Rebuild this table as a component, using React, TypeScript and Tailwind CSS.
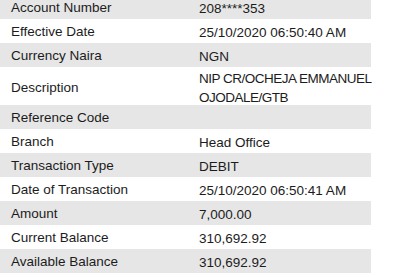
const rows: { label: string; value: string[] }[] = [
  { label: "Account Number", value: ["208****353"] },
  { label: "Effective Date", value: ["25/10/2020 06:50:40 AM"] },
  { label: "Currency Naira", value: ["NGN"] },
  { label: "Description", value: ["NIP CR/OCHEJA EMMANUEL", "OJODALE/GTB"] },
  { label: "Reference Code", value: [""] },
  { label: "Branch", value: ["Head Office"] },
  { label: "Transaction Type", value: ["DEBIT"] },
  { label: "Date of Transaction", value: ["25/10/2020 06:50:41 AM"] },
  { label: "Amount", value: ["7,000.00"] },
  { label: "Current Balance", value: ["310,692.92"] },
  { label: "Available Balance", value: ["310,692.92"] },
];

export default function App() {
  return (
    <div className="w-[396px] h-[277px] overflow-hidden bg-white">
      <div
        className="-mt-[5px] w-[371px] text-[13.5px] text-[#1c1c1c]"
        style={{ fontFamily: '"Liberation Sans", Arial, sans-serif' }}
      >
        {rows.map((row, i) => {
          const multi = row.value.length > 1;
          return (
            <div
              key={row.label}
              className={`grid grid-cols-[199px_1fr] items-center pt-[2px] ${
                multi ? "h-[38px]" : "h-[24px]"
              } ${i % 2 === 0 ? "bg-[#e6e6e6]" : "bg-white"}`}
            >
              <div className="pl-[11px] whitespace-nowrap">{row.label}</div>
              <div
                className={`leading-[19px] whitespace-nowrap ${
                  multi ? "tracking-[-0.5px]" : ""
                }`}
              >
                {row.value.map((line, j) => (
                  <div key={j}>{line}</div>
                ))}
              </div>
            </div>
          );
        })}
      </div>
    </div>
  );
}
